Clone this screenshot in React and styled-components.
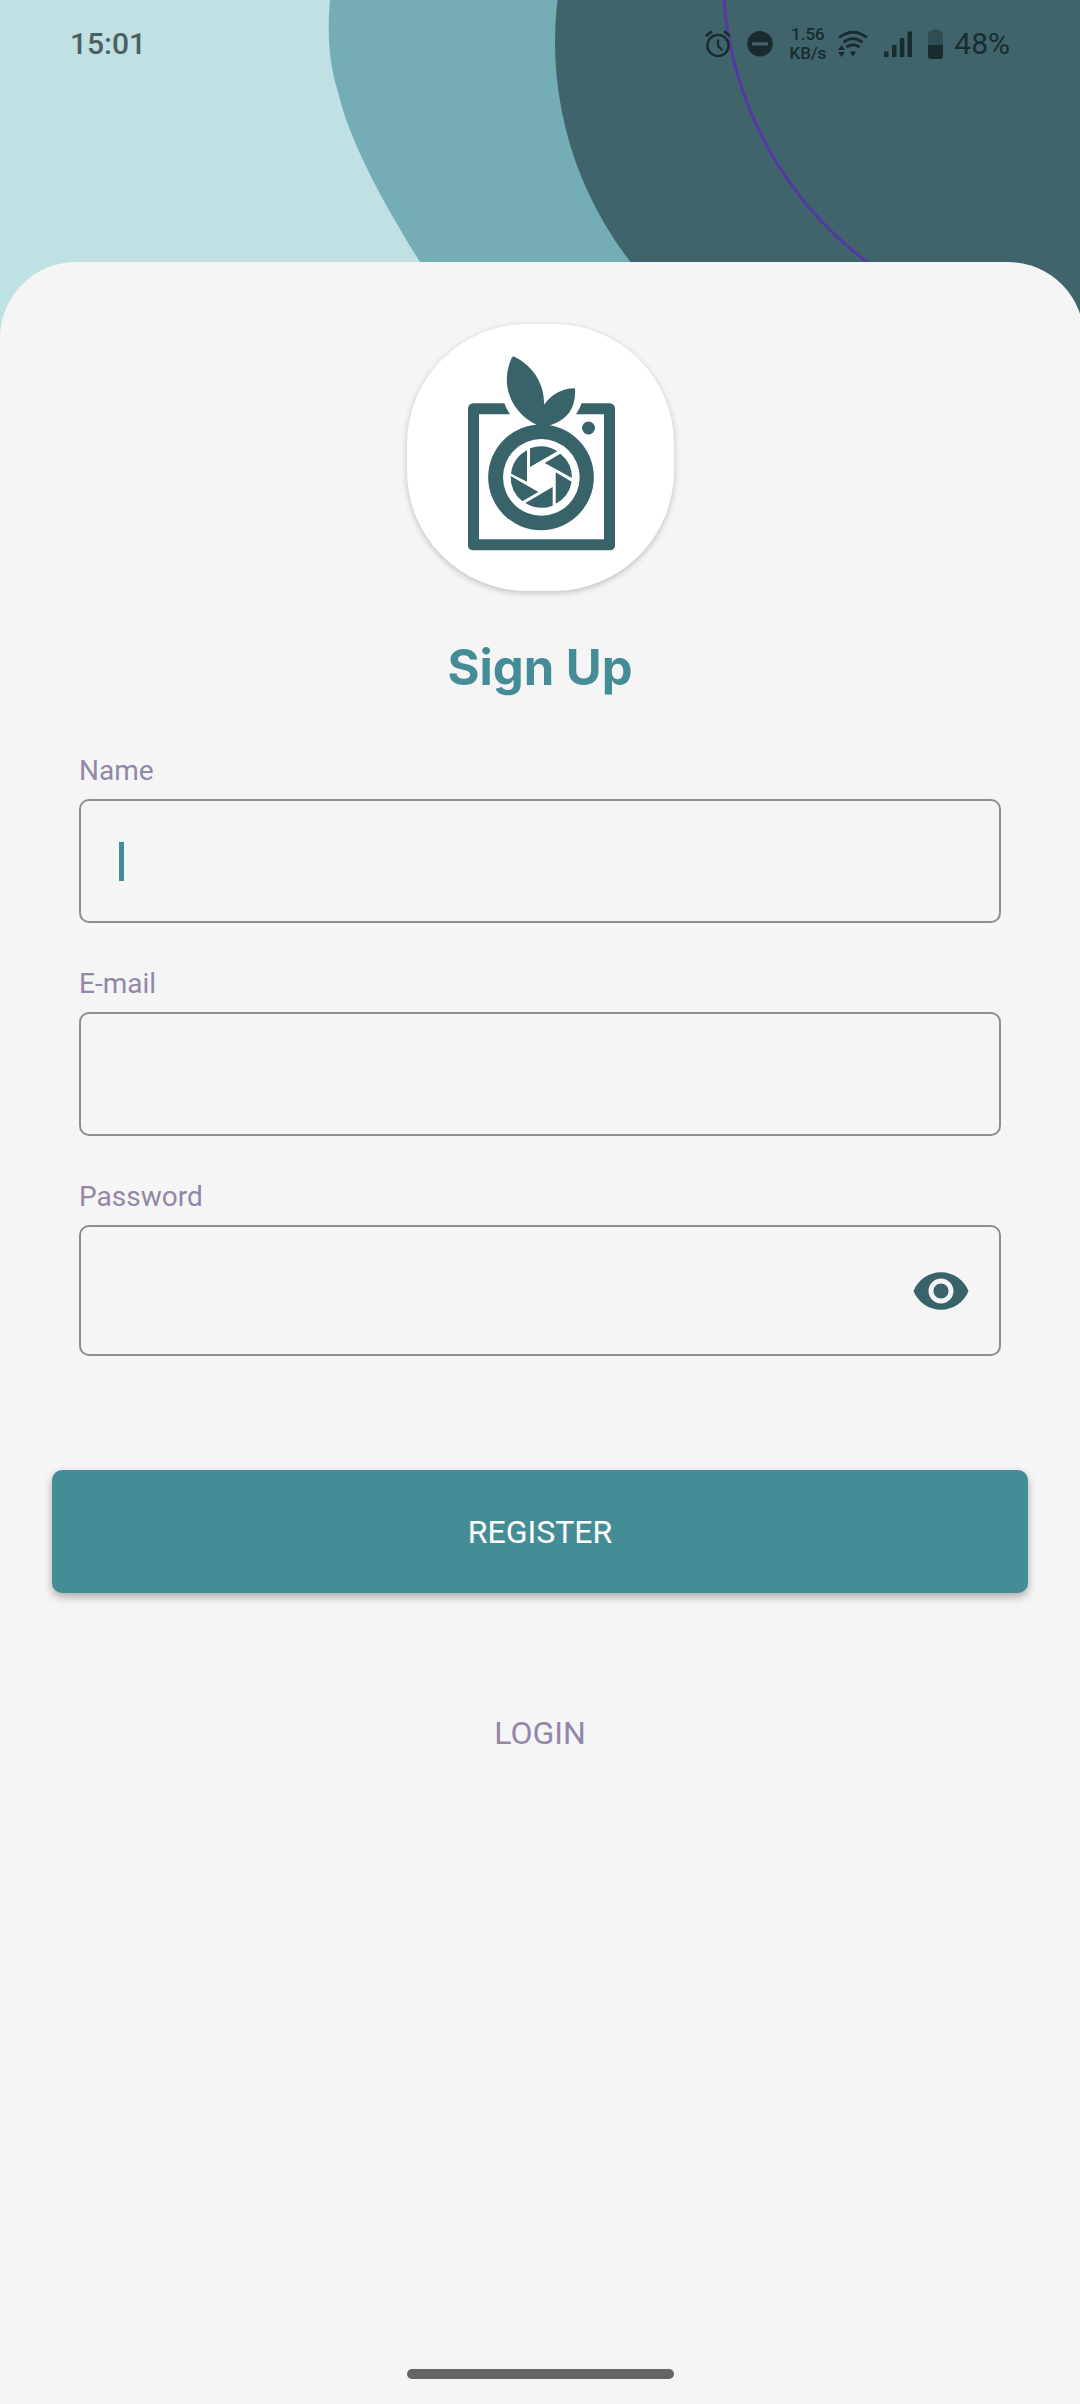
import React, { useState } from 'react';
import styled, { createGlobalStyle } from 'styled-components';

const GlobalStyle = createGlobalStyle`
  *, *::before, *::after { box-sizing: border-box; }
  body { margin: 0; background: #f5f5f5; font-family: Roboto, "Liberation Sans", sans-serif; }
`;

const Page = styled.div`
  position: relative;
  display: flex;
  flex-direction: column;
  min-height: 100vh;
  overflow: hidden;
  background: #f5f5f5;
`;

const Backdrop = styled.svg`
  position: absolute;
  top: 0;
  left: 0;
  width: 100%;
  height: 360px;
  background: #bfe1e3;
`;

const StatusBar = styled.header`
  position: relative;
  display: flex;
  align-items: center;
  justify-content: space-between;
  height: 88px;
  margin-bottom: 174px;
  padding: 0 70px;
  font-size: 30px;
  line-height: 36px;
`;

const Clock = styled.time`
  color: #4d605f;
  font-weight: 500;
`;

const StatusGroup = styled.div`
  display: flex;
  align-items: center;
  gap: ${(p) => p.$gap}px;
  color: #1a2b2e;
`;

const StatusIcon = styled.svg`
  display: block;
  flex: none;
  fill: currentColor;
`;

const NetRate = styled.span`
  font-size: 17px;
  font-weight: 500;
  line-height: 19px;
  text-align: center;
`;

const Card = styled.main`
  position: relative;
  flex: 1;
  display: flex;
  flex-direction: column;
  align-items: center;
  margin-right: -4px;
  padding: 62px 56px 25px 52px;
  border-radius: 76px 76px 0 0;
  background: #f5f5f5;
`;

const LogoBadge = styled.div`
  width: 267px;
  height: 267px;
  border-radius: 120px;
  background: #fff;
  box-shadow: 0 2px 6px rgba(0, 0, 0, 0.22);
`;

const LogoMark = styled.svg`
  display: block;
  width: 100%;
  height: 100%;
  fill: #376369;
`;

const Title = styled.h1`
  margin: 47px 0 55px;
  color: #448d96;
  font: 700 49px/60px Inter, "Liberation Sans", sans-serif;
`;

const Form = styled.form`
  display: flex;
  flex-direction: column;
  width: 100%;
`;

const Fields = styled.div`
  display: flex;
  flex-direction: column;
  gap: 43px;
  padding: 0 27px;
`;

const Field = styled.div`
  display: flex;
  flex-direction: column;
  gap: 10px;
`;

const Label = styled.label`
  color: #9387a8;
  font-size: 28px;
  line-height: 36px;
`;

const InputBox = styled.div`
  display: flex;
  align-items: center;
  height: ${(p) => (p.$tall ? 131 : 124)}px;
  padding: 0 28px 0 38px;
  border: 2px solid #8e8e8e;
  border-radius: 10px;
`;

const Caret = styled.span`
  flex: none;
  width: 5px;
  height: 39px;
  background: #448d96;
`;

const Input = styled.input`
  flex: 1;
  min-width: 0;
  height: 100%;
  padding: 0;
  border: 0;
  outline: 0;
  background: transparent;
  color: #376369;
  caret-color: #448d96;
  font: 400 32px/40px Roboto, "Liberation Sans", sans-serif;
`;

const EyeButton = styled.button`
  flex: none;
  padding: 0;
  border: 0;
  background: transparent;
  color: #376369;
  cursor: pointer;
`;

const RegisterButton = styled.button`
  height: 123px;
  margin-top: 114px;
  padding: 0;
  border: 0;
  border-radius: 10px;
  background: #448d96;
  box-shadow: 0 4px 8px rgba(0, 0, 0, 0.3);
  color: #fff;
  font: 400 32px/40px Roboto, "Liberation Sans", sans-serif;
  cursor: pointer;
`;

const LoginLink = styled.a`
  margin-top: 120px;
  color: #9387a8;
  font-size: 32px;
  line-height: 40px;
  text-decoration: none;
`;

const HomeBar = styled.div`
  width: 267px;
  height: 10px;
  margin-top: auto;
  border-radius: 5px;
  background: #646464;
`;

function BackdropArt() {
  return (
    <Backdrop viewBox="0 0 1080 360" preserveAspectRatio="xMaxYMin slice" aria-hidden="true">
      <path fill="#74adb5" d="M330 0C327 35 329 62 338 92C350 143 385 206 420 262L481 360H1080V0Z" />
      <circle cx="913" cy="42" r="358" fill="#3f646b" />
      <rect x="913" width="167" height="360" fill="#3f646b" />
      <circle cx="1085" cy="-27" r="362" fill="none" stroke="#5638a5" strokeWidth="3" />
    </Backdrop>
  );
}

function AlarmIcon() {
  return (
    <StatusIcon width="26" height="28" viewBox="0 0 26 28">
      <g fill="none" stroke="currentColor">
        <circle cx="13" cy="15.5" r="10.6" strokeWidth="2.4" />
        <path d="M13 9.5V16L17.3 20.3" strokeWidth="2.2" />
        <path d="M1 6L7 1.2M25 6L19 1.2" strokeWidth="2.6" />
      </g>
    </StatusIcon>
  );
}

function DoNotDisturbIcon() {
  return (
    <StatusIcon width="26" height="28" viewBox="0 0 26 28">
      <path fillRule="evenodd" d="M13 1a12.8 12.8 0 1 0 0 25.6A12.8 12.8 0 0 0 13 1ZM5 12.2h16v3.2H5Z" />
    </StatusIcon>
  );
}

function WifiIcon() {
  return (
    <StatusIcon width="30" height="28" viewBox="0 0 30 28">
      <g fill="none" stroke="currentColor" strokeWidth="2.8">
        <path d="M1 7.5Q15 -3 29 7.5" />
        <path d="M5.5 12.3Q15 5 24.5 12.3" />
        <path d="M8.5 17Q15 12.5 21.5 17" />
      </g>
      <path d="M15 26.5l-3-4.5q3-1.5 6 0ZM3.5 15l3.5 5H0ZM3.5 27L0 22h7Z" />
    </StatusIcon>
  );
}

function SignalIcon() {
  return (
    <StatusIcon width="28" height="28" viewBox="0 0 28 28">
      <path d="M0 21.5h4.5V27H0ZM8 15h4.5v12H8ZM15.8 8h4.5v19h-4.5ZM23.5 1.5H28V27h-4.5Z" />
    </StatusIcon>
  );
}

function BatteryIcon() {
  return (
    <StatusIcon width="16" height="30" viewBox="0 0 16 30">
      <path fill="#2f4d52" d="M4.5 1.8Q5 0 7.5 0T10.5 1.8H12Q15 2 15 5V16H0V5Q0 2 3 1.8Z" />
      <path d="M0 16H15V27Q15 30 12 30H3Q0 30 0 27Z" />
    </StatusIcon>
  );
}

function Logo() {
  return (
    <LogoMark viewBox="51 41 801 801" role="img" aria-label="Camera logo">
      <path d="M343 279H250Q234 281 234 295V705Q234 718 248 720H661Q675 718 675 705V295Q675 281 659 279H575Q568 298 558 312H642V687H267V312H360Q350 298 343 279Z" />
      <path d="M370 138C430 166 464 222 462 283C485 252 517 234 555 234C559 290 533 328 483 344L453 352L437 342C371 310 330 233 361 152Q364 141 370 138Z" />
      <path fillRule="evenodd" d="M453 342.5a158.5 158.5 0 1 0 0 317a158.5 158.5 0 1 0 0-317ZM454 386a115 115 0 1 1 0 230a115 115 0 1 1 0-230Z" />
      <circle cx="595.5" cy="353" r="19.5" />
      <path d="M420 414A93 93 0 0 1 502 423L420 470Z" />
      <path d="M511 430A93 93 0 0 1 546 503L464 458Z" />
      <path d="M545 514A93 93 0 0 1 497 580V486Z" />
      <path d="M488 586A93 93 0 0 1 406 578L488 530Z" />
      <path d="M397 573A93 93 0 0 1 362 497L445 545Z" />
      <path d="M363 490A93 93 0 0 1 411 420V514Z" />
    </LogoMark>
  );
}

export default function App() {
  const [shown, setShown] = useState(false);
  return (
    <Page>
      <GlobalStyle />
      <BackdropArt />
      <StatusBar>
        <Clock>15:01</Clock>
        <StatusGroup $gap={16}>
          <AlarmIcon />
          <DoNotDisturbIcon />
          <StatusGroup $gap={12}>
            <NetRate>
              1.56
              <br />
              KB/s
            </NetRate>
            <WifiIcon />
          </StatusGroup>
          <SignalIcon />
          <StatusGroup $gap={10}>
            <BatteryIcon />
            <span>48%</span>
          </StatusGroup>
        </StatusGroup>
      </StatusBar>
      <Card>
        <LogoBadge>
          <Logo />
        </LogoBadge>
        <Title>Sign Up</Title>
        <Form onSubmit={(e) => e.preventDefault()}>
          <Fields>
            <Field>
              <Label htmlFor="name">Name</Label>
              <InputBox>
                <Caret />
                <Input id="name" type="text" />
              </InputBox>
            </Field>
            <Field>
              <Label htmlFor="email">E-mail</Label>
              <InputBox>
                <Input id="email" type="email" />
              </InputBox>
            </Field>
            <Field>
              <Label htmlFor="password">Password</Label>
              <InputBox $tall>
                <Input id="password" type={shown ? 'text' : 'password'} />
                <EyeButton type="button" aria-label="Show password" onClick={() => setShown(!shown)}>
                  <StatusIcon width="60" height="60" viewBox="0 0 24 24">
                    <path d="M12 4.5C7 4.5 2.73 7.61 1 12c1.73 4.39 6 7.5 11 7.5s9.27-3.11 11-7.5c-1.73-4.39-6-7.5-11-7.5zM12 17c-2.76 0-5-2.24-5-5s2.24-5 5-5 5 2.24 5 5-2.24 5-5 5zm0-8c-1.66 0-3 1.34-3 3s1.34 3 3 3 3-1.34 3-3-1.34-3-3-3z" />
                  </StatusIcon>
                </EyeButton>
              </InputBox>
            </Field>
          </Fields>
          <RegisterButton type="submit">REGISTER</RegisterButton>
        </Form>
        <LoginLink href="#login">LOGIN</LoginLink>
        <HomeBar />
      </Card>
    </Page>
  );
}
